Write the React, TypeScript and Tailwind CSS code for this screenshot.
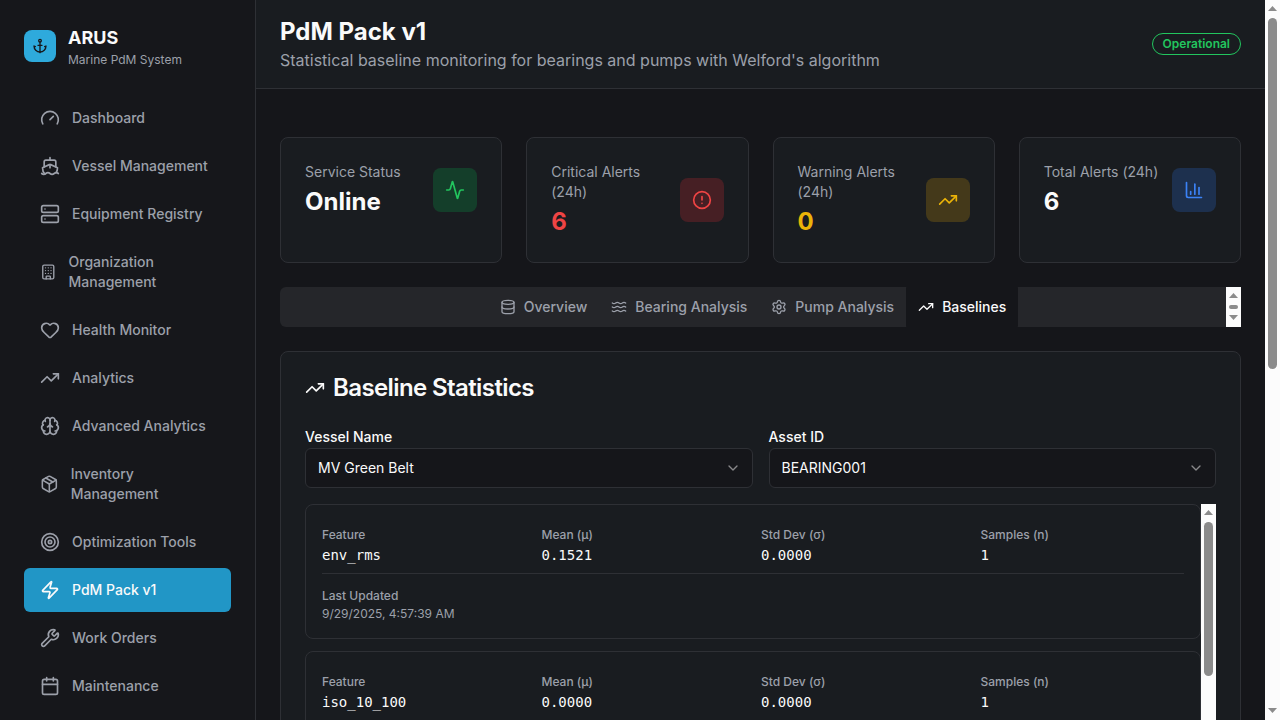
import { useLayoutEffect, useRef, useState, type ReactNode } from "react";
import {
  Activity,
  Anchor,
  Brain,
  Building,
  Calendar,
  ChartColumn,
  ChevronDown,
  CircleAlert,
  Database,
  Gauge,
  Heart,
  Package,
  Server,
  Settings,
  Ship,
  Target,
  TrendingUp,
  Waves,
  Wrench,
  Zap,
  type LucideIcon,
} from "lucide-react";

const navItems: { label: string; icon: LucideIcon }[] = [
  { label: "Dashboard", icon: Gauge },
  { label: "Vessel Management", icon: Ship },
  { label: "Equipment Registry", icon: Server },
  { label: "Organization Management", icon: Building },
  { label: "Health Monitor", icon: Heart },
  { label: "Analytics", icon: TrendingUp },
  { label: "Advanced Analytics", icon: Brain },
  { label: "Inventory Management", icon: Package },
  { label: "Optimization Tools", icon: Target },
  { label: "PdM Pack v1", icon: Zap },
  { label: "Work Orders", icon: Wrench },
  { label: "Maintenance", icon: Calendar },
];

const stats: { label: string; value: string; icon: LucideIcon; valueClass: string; iconClass: string }[] = [
  { label: "Service Status", value: "Online", icon: Activity, valueClass: "text-[#fafafa]", iconClass: "bg-green-500/20 text-[#22c55e]" },
  { label: "Critical Alerts (24h)", value: "6", icon: CircleAlert, valueClass: "text-[#ef4444]", iconClass: "bg-red-500/20 text-[#ef4444]" },
  { label: "Warning Alerts (24h)", value: "0", icon: TrendingUp, valueClass: "text-[#eab308]", iconClass: "bg-yellow-500/20 text-[#eab308]" },
  { label: "Total Alerts (24h)", value: "6", icon: ChartColumn, valueClass: "text-[#fafafa]", iconClass: "bg-blue-500/20 text-[#3b82f6]" },
];

const tabs: { label: string; icon: LucideIcon }[] = [
  { label: "Overview", icon: Database },
  { label: "Bearing Analysis", icon: Waves },
  { label: "Pump Analysis", icon: Settings },
  { label: "Baselines", icon: TrendingUp },
];

const baselines = [
  { feature: "env_rms", mean: "0.1521", std: "0.0000", samples: "1" },
  { feature: "iso_10_100", mean: "0.0000", std: "0.0000", samples: "1" },
  { feature: "iso_100_1k", mean: "0.0000", std: "0.0000", samples: "1" },
  { feature: "kurtosis", mean: "0.0000", std: "0.0000", samples: "1" },
  { feature: "rms", mean: "0.0000", std: "0.0000", samples: "1" },
  { feature: "crest_factor", mean: "0.0000", std: "0.0000", samples: "1" },
];

/** Scrolling region with a classic arrow-and-thumb scrollbar beside it. */
function ScrollRegion({ className, contentClass, children }: { className: string; contentClass: string; children: ReactNode }) {
  const content = useRef<HTMLDivElement>(null);
  const track = useRef<HTMLDivElement>(null);
  const [thumb, setThumb] = useState({ size: 0, offset: 0 });

  const update = () => {
    const c = content.current;
    const t = track.current;
    if (!c || !t) return;
    const size = Math.min(t.clientHeight, Math.max(4, Math.round((t.clientHeight * c.clientHeight) / c.scrollHeight)));
    const range = c.scrollHeight - c.clientHeight;
    setThumb({ size, offset: range > 0 ? ((t.clientHeight - size) * c.scrollTop) / range : 0 });
  };

  useLayoutEffect(() => {
    update();
    window.addEventListener("resize", update);
    return () => window.removeEventListener("resize", update);
  }, []);

  const scrollBy = (top: number) => content.current?.scrollBy({ top });

  return (
    <div className={`flex ${className}`}>
      <div ref={content} onScroll={update} className={`min-w-0 flex-1 overflow-y-scroll [scrollbar-width:none] ${contentClass}`}>
        {children}
      </div>
      <div className="flex w-[15px] shrink-0 flex-col items-center bg-[#fcfcfc] text-[#8b8b8b]">
        <button type="button" aria-label="Scroll up" tabIndex={-1} onClick={() => scrollBy(-40)} className="h-[18px] shrink-0">
          <svg width="15" height="18" viewBox="0 0 15 18" fill="currentColor">
            <path d="M3 11 7.5 6 12 11z" />
          </svg>
        </button>
        <div ref={track} className="min-h-0 w-[9px] flex-1">
          <div className="rounded-full bg-[#8b8b8b]" style={{ height: thumb.size, transform: `translateY(${thumb.offset}px)` }} />
        </div>
        <button type="button" aria-label="Scroll down" tabIndex={-1} onClick={() => scrollBy(40)} className="h-[18px] shrink-0">
          <svg width="15" height="18" viewBox="0 0 15 18" fill="currentColor">
            <path d="M3 6h9l-4.5 5z" />
          </svg>
        </button>
      </div>
    </div>
  );
}

function Sidebar() {
  return (
    <aside className="w-64 shrink-0 overflow-hidden border-r border-[#2e3035] bg-[#16171b] px-6 pt-6">
      <div className="flex items-center gap-3">
        <div className="flex size-8 items-center justify-center rounded-lg bg-[#2eaadc] text-[#16171b]">
          <Anchor className="size-4" />
        </div>
        <div>
          <div className="text-lg font-bold text-[#fafafa]">ARUS</div>
          <p className="text-xs text-[#9ca0aa]">Marine PdM System</p>
        </div>
      </div>
      <nav className="mt-7 flex flex-col gap-1">
        {navItems.map(({ label, icon: Icon }) => (
          <a
            key={label}
            href="#"
            aria-current={label === "PdM Pack v1" ? "page" : undefined}
            className={
              label === "PdM Pack v1"
                ? "flex items-center gap-3 rounded-md bg-[#2196c6] px-4 py-3 text-sm font-medium text-[#fafafa]"
                : "flex items-center gap-3 rounded-md px-4 py-3 text-sm font-medium text-[#9ca0aa]"
            }
          >
            <Icon className="size-5" />
            <span>{label}</span>
          </a>
        ))}
      </nav>
    </aside>
  );
}

function SelectField({ id, label, value }: { id: string; label: string; value: string }) {
  return (
    <div>
      <div>
        <label htmlFor={id} className="text-sm leading-none font-medium">
          {label}
        </label>
      </div>
      <div className="relative">
        <select
          id={id}
          defaultValue={value}
          className="block h-10 w-full appearance-none rounded-md border border-[#2e3035] bg-[#15161a] px-3 text-sm text-[#fafafa]"
        >
          <option>{value}</option>
        </select>
        <ChevronDown className="pointer-events-none absolute top-3 right-3 size-4 opacity-50" />
      </div>
    </div>
  );
}

function Metric({ label, value }: { label: string; value: string }) {
  return (
    <div>
      <div>
        <span className="text-xs leading-none font-medium text-[#9ca0aa]">{label}</span>
      </div>
      <p className="font-['DejaVu_Sans_Mono',monospace] text-sm">{value}</p>
    </div>
  );
}

export default function App() {
  const [tab, setTab] = useState("Baselines");
  return (
    <div className="flex h-screen bg-[#15161a] font-['Inter',sans-serif] text-[#fafafa]">
      <Sidebar />
      <ScrollRegion className="min-w-0 flex-1" contentClass="">
        <header className="flex items-center justify-between border-b border-[#2e3035] bg-[#191c20] px-6 py-4">
          <div>
            <h1 className="text-2xl font-bold">PdM Pack v1</h1>
            <p className="text-[#9ca0aa]">Statistical baseline monitoring for bearings and pumps with Welford's algorithm</p>
          </div>
          <span className="rounded-full border border-[#22c55e] px-2.5 py-0.5 text-xs font-semibold text-[#22c55e]">
            Operational
          </span>
        </header>

        <main className="flex flex-col gap-6 px-6 pt-12 pb-[490px]">
          <section className="grid grid-cols-4 gap-6">
            {stats.map(({ label, value, icon: Icon, valueClass, iconClass }) => (
              <div key={label} className="rounded-lg border border-[#2e3035] bg-[#191c20] p-6">
                <div className="flex items-center justify-between">
                  <div>
                    <p className="text-sm text-[#9ca0aa]">{label}</p>
                    <p className={`mt-1 text-2xl font-bold ${valueClass}`}>{value}</p>
                  </div>
                  <div className={`rounded-lg p-3 ${iconClass}`}>
                    <Icon className="size-5" />
                  </div>
                </div>
              </div>
            ))}
          </section>

          <ScrollRegion
            className="h-10 rounded-md bg-[#25262a]"
            contentClass="flex items-center justify-center p-1"
          >
            <div role="tablist" className="flex">
              {tabs.map(({ label, icon: Icon }) => (
                <button
                  key={label}
                  type="button"
                  role="tab"
                  aria-selected={tab === label}
                  onClick={() => setTab(label)}
                  className={
                    tab === label
                      ? "flex h-11 items-center gap-2 rounded-sm bg-[#15161a] px-3 text-sm font-medium text-[#fafafa]"
                      : "flex h-11 items-center gap-2 rounded-sm px-3 text-sm font-medium text-[#9ca0aa]"
                  }
                >
                  <Icon className="size-4" />
                  {label}
                </button>
              ))}
            </div>
          </ScrollRegion>

          <section className="rounded-lg border border-[#2e3035] bg-[#191c20] p-6">
            <h2 className="flex items-center gap-2 text-2xl leading-none font-semibold tracking-tight">
              <TrendingUp className="size-5" />
              Baseline Statistics
            </h2>
            <div className="mt-6 grid grid-cols-2 gap-4">
              <SelectField id="vessel" label="Vessel Name" value="MV Green Belt" />
              <SelectField id="asset" label="Asset ID" value="BEARING001" />
            </div>
            <ScrollRegion className="mt-4 h-96" contentClass="flex flex-col gap-3">
              {baselines.map((row) => (
                <article key={row.feature} className="shrink-0 rounded-lg border border-[#2e3035] p-4">
                  <div className="grid grid-cols-4 gap-4">
                    <Metric label="Feature" value={row.feature} />
                    <Metric label="Mean (μ)" value={row.mean} />
                    <Metric label="Std Dev (σ)" value={row.std} />
                    <Metric label="Samples (n)" value={row.samples} />
                  </div>
                  <div className="mt-2 border-t border-[#2e3035] pt-2 text-[#9ca0aa]">
                    <div>
                      <span className="text-xs leading-none font-medium">Last Updated</span>
                    </div>
                    <p className="text-xs">9/29/2025, 4:57:39 AM</p>
                  </div>
                </article>
              ))}
            </ScrollRegion>
          </section>
        </main>
      </ScrollRegion>
    </div>
  );
}
